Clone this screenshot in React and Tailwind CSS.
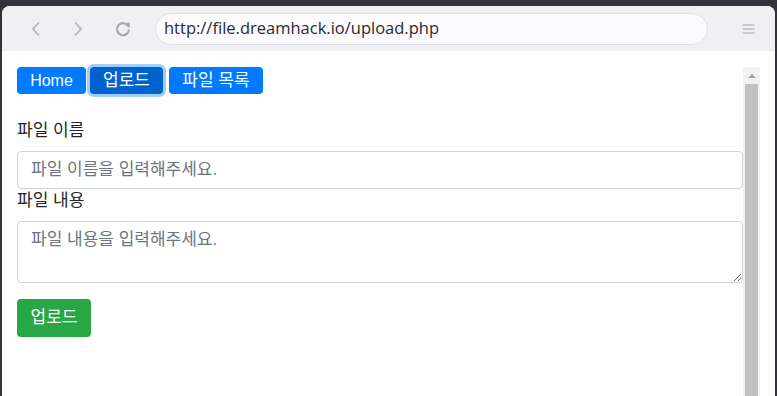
import React from "react";

const sans = "font-['Liberation_Sans','Noto_Sans_CJK_KR',sans-serif]";

const Toolbar = () => {
  return (
    <div className="h-[45px] bg-[#f0f0f4] rounded-t-[8px] flex items-center">
      <div className="w-[153px] flex items-center h-full">
        <svg className="ml-[29px]" width="10" height="16" viewBox="0 0 10 16">
          <polyline points="8,1.5 2,8 8,14.5" fill="none" stroke="#b4b4bc" strokeWidth="1.8" />
        </svg>
        <svg className="ml-[32px]" width="10" height="16" viewBox="0 0 10 16">
          <polyline points="2,1.5 8,8 2,14.5" fill="none" stroke="#b4b4bc" strokeWidth="1.8" />
        </svg>
        <svg className="ml-[31px]" width="18" height="18" viewBox="0 0 18 18">
          <path d="M14.2 6.2 A6 6 0 1 0 15 9.5" fill="none" stroke="#a8a8b0" strokeWidth="2.2" />
          <polygon points="10.5,3 16,2.5 15.5,8" fill="#a8a8b0" />
        </svg>
      </div>
      <div className="w-[553px] h-[32px] rounded-full bg-[#fbfbfd] border border-[#dedee6] flex items-center pl-[8px]">
        <span className="font-['Open_Sans',sans-serif] text-[16.5px] text-[#2b2a33]">http://file.dreamhack.io/upload.php</span>
      </div>
      <div className="flex-1 flex justify-center pl-[14px]">
        <svg width="13" height="10" viewBox="0 0 13 10">
          <line x1="0.5" y1="1" x2="12.5" y2="1" stroke="#b8b8c0" strokeWidth="1.4" />
          <line x1="0.5" y1="5" x2="12.5" y2="5" stroke="#b8b8c0" strokeWidth="1.4" />
          <line x1="0.5" y1="9" x2="12.5" y2="9" stroke="#b8b8c0" strokeWidth="1.4" />
        </svg>
      </div>
    </div>
  );
};

const Scrollbar = () => {
  return (
    <div className="w-[17px] mt-[16px] bg-[#f1f1f1] flex flex-col items-center">
      <div className="h-[17px] flex items-center justify-center">
        <div className="w-0 h-0 border-l-[4px] border-r-[4px] border-b-[4px] border-l-transparent border-r-transparent border-b-[#a3a3a3]" />
      </div>
      <div className="w-[13px] flex-1 bg-[#c1c1c1]" />
    </div>
  );
};

const App = () => {
  return (
    <div className="w-[777px] h-[396px] bg-[#34313f] pt-[6px] px-[2px] overflow-hidden">
      <div className="h-full flex flex-col bg-white rounded-t-[8px]">
        <Toolbar />
        <div className="flex-1 flex bg-white">
          <div className={`flex-1 pl-[15px] pt-[16px] ${sans} text-[#212529]`}>
            <div className="flex">
              <button className="h-[27px] w-[69px] bg-[#007bff] text-white text-[16px] rounded-[4px] leading-[27px]">
                Home
              </button>
              <button className="ml-[4px] h-[27px] w-[73px] bg-[#0062cc] text-white text-[17px] rounded-[4px] leading-[27px] shadow-[0_0_0_3px_rgba(38,143,255,0.45)]">
                업로드
              </button>
              <button className="ml-[6px] h-[27px] w-[94px] bg-[#007bff] text-white text-[17px] rounded-[4px] leading-[27px]">
                파일 목록
              </button>
            </div>
            <label className="block mt-[25px] mb-[8px] text-[17px] leading-[24px]">파일 이름</label>
            <input
              className="block w-full h-[38px] border border-[#ced4da] rounded-[4px] px-[13px] text-[17px] placeholder:text-[#6c757d] outline-none"
              placeholder="파일 이름을 입력해주세요."
            />
            <label className="block mb-[8px] text-[17px] leading-[24px]">파일 내용</label>
            <textarea
              className="block w-full h-[62px] border border-[#ced4da] rounded-[4px] px-[13px] py-[6px] text-[17px] leading-[24px] placeholder:text-[#6c757d] outline-none"
              placeholder="파일 내용을 입력해주세요."
            />
            <button className="mt-[16px] h-[38px] w-[74px] bg-[#28a745] text-white text-[17px] rounded-[4px]">
              업로드
            </button>
          </div>
          <Scrollbar />
          <div className="w-[15px]" />
        </div>
      </div>
    </div>
  );
};

export default App;
